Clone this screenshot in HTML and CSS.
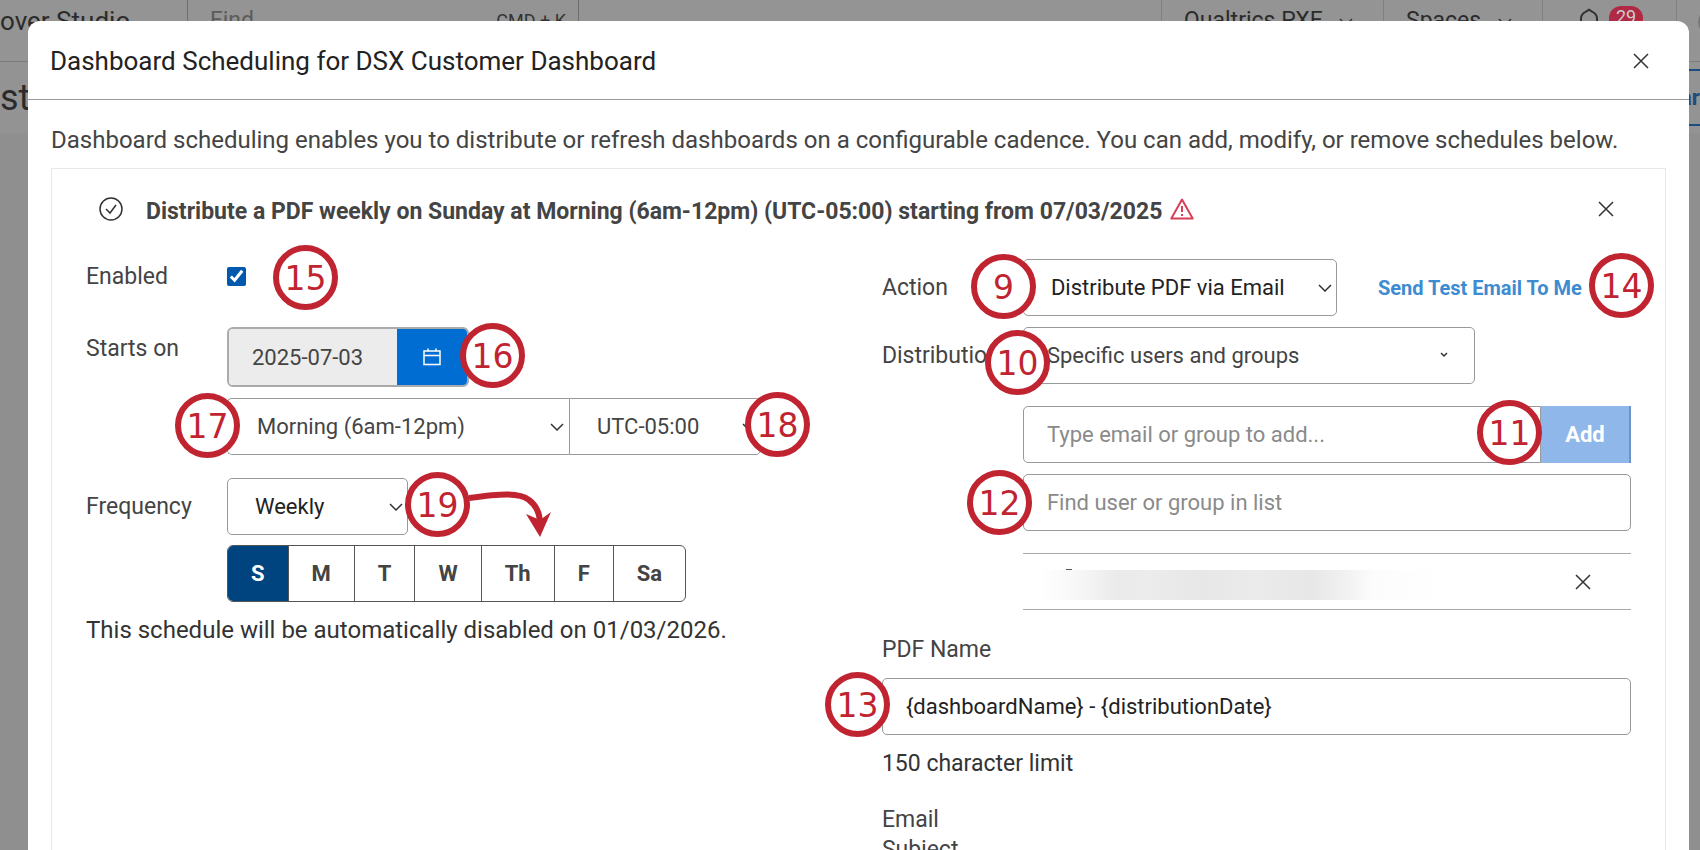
FILE: index.html
```html
<!DOCTYPE html>
<html lang="en">
<head>
    <meta charset="UTF-8">
    <meta name="viewport" content="width=device-width, initial-scale=1.0">
    <title>Dashboard Scheduling</title>
    <link rel="stylesheet" href="styles.css">
</head>
<body>
    <!-- page behind the dialog -->
    <header class="topbar">
        <div class="brand">over Studio</div>
        <div class="search"><span>Find</span><span class="shortcut">CMD + K</span></div>
        <div class="menu">Qualtrics PXE
            <svg width="14" height="8" viewBox="0 0 14 8"><path d="M1 1l6 6 6-6"/></svg>
        </div>
        <div class="menu menu-spaces">Spaces
            <svg width="14" height="8" viewBox="0 0 14 8"><path d="M1 1l6 6 6-6"/></svg>
        </div>
        <div class="alerts">
            <svg width="20" height="24" viewBox="0 0 20 24"><path d="M2 19V10a8 8 0 0 1 5-6.400l3-2 3 2A8 8 0 0 1 18 10v9z"/></svg>
            <span class="count">29</span>
        </div>
        <div class="user"><span></span></div>
    </header>
    <div class="subbar">
        <span class="page-name">st</span>
        <span class="share">ar</span>
    </div>

    <div class="overlay">
        <main class="modal">
            <div class="modal-header">
                <h1>Dashboard Scheduling for DSX Customer Dashboard</h1>
                <button class="close" aria-label="Close">
                    <svg width="16" height="16" viewBox="0 0 16 16"><path d="M1 1l14 14M15 1L1 15"/></svg>
                </button>
            </div>
            <div class="modal-body">
                <p class="intro">Dashboard scheduling enables you to distribute or refresh dashboards on a configurable cadence. You can add, modify, or remove schedules below.</p>

                <section class="card">
                    <div class="card-header">
                        <svg class="check" width="26" height="26" viewBox="0 0 26 26"><circle cx="13" cy="13" r="11"/><path d="M8 13l4 4 6-8"/></svg>
                        <h2>Distribute a PDF weekly on Sunday at Morning (6am-12pm) (UTC-05:00) starting from 07/03/2025</h2>
                        <svg class="warn" width="24" height="22" viewBox="0 0 24 22"><path d="M12 1.500L22.700 20.500H1.300z"/><path d="M12 8v6M12 16v2"/></svg>
                        <button class="close" aria-label="Remove schedule">
                            <svg width="16" height="16" viewBox="0 0 16 16"><path d="M1 1l14 14M15 1L1 15"/></svg>
                        </button>
                    </div>

                    <div class="columns">
                        <div class="left">
                            <div class="row row-enabled">
                                <label for="enabled">Enabled</label>
                                <input type="checkbox" id="enabled" checked>
                            </div>
                            <div class="row row-start">
                                <label for="start">Starts on</label>
                                <div class="date">
                                    <input type="text" id="start" value="2025-07-03" readonly>
                                    <button aria-label="Pick a date">
                                        <svg width="18" height="18" viewBox="0 0 18 18"><path d="M1 3h16v13.500H1zM1 7.500h16M5 0.500v3M13 0.500v3"/></svg>
                                    </button>
                                </div>
                            </div>
                            <div class="row">
                                <span></span>
                                <div class="times">
                                    <div class="select time">
                                        <select aria-label="Time of day"><option>Morning (6am-12pm)</option></select>
                                        <svg width="14" height="8" viewBox="0 0 14 8"><path d="M1 1l6 6 6-6"/></svg>
                                    </div>
                                    <div class="select zone">
                                        <select aria-label="Time zone"><option>UTC-05:00</option></select>
                                        <svg width="14" height="8" viewBox="0 0 14 8"><path d="M1 1l6 6 6-6"/></svg>
                                    </div>
                                </div>
                            </div>
                            <div class="row row-frequency">
                                <label for="frequency">Frequency</label>
                                <div class="select frequency">
                                    <select id="frequency"><option>Weekly</option></select>
                                    <svg width="14" height="8" viewBox="0 0 14 8"><path d="M1 1l6 6 6-6"/></svg>
                                </div>
                            </div>
                            <div class="row row-days">
                                <span></span>
                                <div class="days">
                                    <button class="active">S</button>
                                    <button>M</button>
                                    <button>T</button>
                                    <button>W</button>
                                    <button>Th</button>
                                    <button>F</button>
                                    <button>Sa</button>
                                </div>
                            </div>
                            <p class="note">This schedule will be automatically disabled on 01/03/2026.</p>
                        </div>

                        <div class="right">
                            <div class="row">
                                <label for="action">Action</label>
                                <div class="action">
                                    <div class="select distribute">
                                        <select id="action"><option>Distribute PDF via Email</option></select>
                                        <svg width="14" height="8" viewBox="0 0 14 8"><path d="M1 1l6 6 6-6"/></svg>
                                    </div>
                                    <a href="#">Send Test Email To Me</a>
                                </div>
                            </div>
                            <div class="row row-distribution">
                                <label for="distribution">Distribution</label>
                                <div class="select users">
                                    <select id="distribution"><option>Specific users and groups</option></select>
                                    <svg width="8" height="6" viewBox="0 0 8 6"><path d="M1 1l3 3 3-3"/></svg>
                                </div>
                            </div>
                            <div class="recipients">
                                <div class="add">
                                    <input type="text" aria-label="Recipient" placeholder="Type email or group to add...">
                                    <button>Add</button>
                                </div>
                                <input type="text" aria-label="Find recipient" placeholder="Find user or group in list">
                                <div class="recipient">
                                    <span class="hidden-name"></span>
                                    <button class="close" aria-label="Remove recipient">
                                        <svg width="16" height="16" viewBox="0 0 16 16"><path d="M1 1l14 14M15 1L1 15"/></svg>
                                    </button>
                                </div>
                            </div>
                            <div class="pdf">
                                <label for="pdf-name">PDF Name</label>
                                <input type="text" id="pdf-name" value="{dashboardName} - {distributionDate}">
                                <p>150 character limit</p>
                            </div>
                            <div class="subject">Email<br>Subject</div>
                        </div>
                    </div>
                </section>
            </div>
        </main>
    </div>

    <!-- numbered callouts -->
    <div class="callouts">
        <svg class="arrow" width="84" height="50" viewBox="0 0 84 50">
            <path class="line" d="M0 10C30 6 50 4 60 12C68 18 71 26 71 36"/>
            <path class="head" d="M71 49L57 26L71 32L82 24z"/>
        </svg>
        <span class="callout c9">9</span>
        <span class="callout c10">10</span>
        <span class="callout c11">11</span>
        <span class="callout c12">12</span>
        <span class="callout c13">13</span>
        <span class="callout c14">14</span>
        <span class="callout c15">15</span>
        <span class="callout c16">16</span>
        <span class="callout c17">17</span>
        <span class="callout c18">18</span>
        <span class="callout c19">19</span>
    </div>
</body>
</html>
```

FILE: styles.css
```css
* {
  box-sizing: border-box;
}

body {
  margin: 0;
  height: 100vh;
  overflow: hidden;
  position: relative;
  background-color: #8f8f8f;
  font-family: Roboto, "Liberation Sans", sans-serif;
  font-size: 22px;
  color: #444;
}

h1, h2, p {
  margin: 0;
}

svg {
  display: block;
  flex: none;
  fill: none;
  stroke: #333;
  stroke-width: 1.5;
}

button, input, select {
  font: inherit;
  color: inherit;
  margin: 0;
}

button {
  border: none;
  background: none;
  padding: 0;
  cursor: pointer;
}

/* page behind the dialog */
.topbar {
  display: flex;
  height: 62px;
  line-height: 42px;
  background-color: #949494;
  border-bottom: 1px solid #7c7c7c;
  font-size: 26px;
  color: #2b2b2b;
}

.brand {
  width: 187px;
}

.search {
  display: flex;
  justify-content: space-between;
  width: 392px;
  padding: 0 12px 0 22px;
  border-left: 1px solid #6e6e6e;
  border-right: 1px solid #6e6e6e;
  font-size: 23px;
  color: #5c5c5c;
}

.shortcut {
  font-size: 18px;
  color: #333;
}

.menu {
  display: flex;
  justify-content: space-between;
  width: 222px;
  margin-left: auto;
  padding: 0 30px 0 22px;
  border-left: 1px solid #808080;
  font-size: 23px;
}

.menu svg {
  margin-top: 18px;
}

.menu-spaces {
  width: 159px;
  margin-left: 0;
}

.alerts {
  display: flex;
  gap: 10px;
  width: 134px;
  padding-left: 36px;
  border-left: 1px solid #808080;
}

.alerts svg {
  margin-top: 8px;
  stroke-width: 2;
}

.count {
  width: 34px;
  height: 26px;
  margin-top: 6px;
  border-radius: 12px;
  background-color: #b02a45;
  color: #ccc;
  font-size: 18px;
  line-height: 22px;
  text-align: center;
}

.user {
  width: 24px;
  padding: 10px 0 0 21px;
  border-left: 1px solid #808080;
  overflow: hidden;
}

.user span {
  display: block;
  width: 24px;
  height: 24px;
  border-radius: 50%;
  background-color: #777;
}

.subbar {
  display: flex;
  justify-content: space-between;
  height: 71px;
  padding: 7px 0;
  background-color: #939393;
}

.page-name {
  font-size: 36px;
  line-height: 58px;
  color: #2b2b2b;
}

.share {
  width: 20px;
  border: solid #1d4c80;
  border-width: 2px 0;
  color: #1d4c80;
  font-size: 22px;
  font-weight: bold;
  line-height: 54px;
}

/* dialog */
.overlay {
  position: absolute;
  inset: 0;
  padding: 21px 11px 0 28px;
  overflow: hidden;
}

.modal {
  min-height: 100%;
  background-color: #fff;
  border-radius: 12px 12px 0 0;
}

.modal-header {
  display: flex;
  align-items: center;
  justify-content: space-between;
  height: 79px;
  padding: 2px 40px 0 22px;
  border-bottom: 1px solid #999;
}

h1 {
  font-size: 26px;
  font-weight: normal;
  color: #222;
}

.modal-body {
  padding: 24px 23px 0 23px;
}

.intro {
  font-size: 24px;
  line-height: 32px;
  white-space: nowrap;
}

.card {
  margin-top: 12px;
  padding: 0 34px;
  border: 1px solid #e8e8e8;
  height: 760px;
}

.card-header {
  display: flex;
  align-items: center;
  height: 80px;
  padding-left: 12px;
}

h2 {
  margin: 0 8px 0 22px;
  padding-top: 6px;
  font-size: 23px;
  line-height: 28px;
  white-space: nowrap;
}

.card-header .close {
  margin: 0 17px 0 auto;
}

.warn {
  stroke: #d63f55;
  stroke-width: 2;
  stroke-linejoin: round;
}

.columns {
  display: grid;
  grid-template-columns: 17fr 16fr;
}

.row {
  display: grid;
  grid-template-columns: 141px 1fr;
  align-items: center;
}

label, .pdf p, .subject {
  font-size: 23px;
}

.left {
  padding-top: 11px;
}

.right {
  padding-top: 10px;
}

.row-enabled {
  height: 32px;
}

.row-enabled input {
  width: 19px;
  height: 19px;
  accent-color: #0059ad;
}

.row-start {
  margin-top: 35px;
  align-items: start;
  line-height: 44px;
}

input[type="text"] {
  display: block;
  width: 100%;
  height: 57px;
  padding: 0 23px;
  border: 1px solid #999;
  border-radius: 5px;
  background-color: #fff;
}

input::placeholder {
  color: #8a8a8a;
}

.date {
  display: flex;
  width: 242px;
  height: 60px;
  border: 2px solid #aaa;
  border-radius: 6px;
  overflow: hidden;
}

.date input[type="text"] {
  flex: 1;
  min-width: 0;
  height: 100%;
  border: none;
  border-radius: 0;
  background-color: #ececec;
}

.date button {
  display: flex;
  align-items: center;
  justify-content: center;
  width: 70px;
  background-color: #006dd3;
}

.date svg {
  stroke: #fff;
}

.select {
  position: relative;
}

.select select {
  appearance: none;
  display: block;
  width: 100%;
  height: 57px;
  padding: 0 27px;
  border: 1px solid #999;
  border-radius: 5px;
  background-color: #fff;
}

.select svg {
  position: absolute;
  right: 5px;
  top: 25px;
  pointer-events: none;
}

.times {
  display: flex;
  margin-top: 11px;
}

.time {
  width: 342px;
}

.time select {
  padding: 0 29px;
  border-radius: 5px 0 0 5px;
  border-right: none;
}

.zone {
  width: 192px;
}

.zone select {
  border-radius: 0 5px 5px 0;
}

.row-frequency {
  margin-top: 23px;
}

.frequency {
  width: 181px;
}

.frequency select, .distribute select {
  color: #222;
}

.row-days {
  margin-top: 10px;
}

.days {
  display: flex;
  justify-self: start;
  border: 1px solid #555;
  border-radius: 6px;
  overflow: hidden;
}

.days button {
  height: 55px;
  padding: 0 23px;
  border-left: 1px solid #555;
  font-weight: bold;
}

.days .active {
  border-left: none;
  background-color: #00447f;
  color: #fff;
}

.note {
  margin-top: 12px;
  font-size: 24px;
  line-height: 32px;
  color: #333;
}

.action {
  display: flex;
  align-items: center;
}

.distribute {
  width: 314px;
}

.action a {
  margin-left: 41px;
  font-size: 20px;
  font-weight: bold;
  color: #3d8bd0;
  text-decoration: none;
  white-space: nowrap;
}

.row-distribution {
  margin-top: 11px;
}

.users {
  width: 452px;
}

.users select {
  padding: 0 23px;
}

.users svg {
  right: 27px;
}

.recipients {
  margin: 22px 0 0 141px;
}

.add {
  display: flex;
  margin-bottom: 11px;
}

.add input[type="text"] {
  flex: 1;
  min-width: 0;
  border-radius: 5px 0 0 5px;
}

.add button {
  width: 90px;
  border-right: 2px solid #6d95c8;
  background-color: #8fb7ea;
  color: #fff;
  font-weight: bold;
}

.recipient {
  display: flex;
  align-items: center;
  justify-content: space-between;
  height: 57px;
  margin-top: 22px;
  padding: 0 40px 0 17px;
  border: solid #aaa;
  border-width: 1px 0;
}

.hidden-name {
  position: relative;
  width: 405px;
  height: 30px;
  margin-top: 6px;
  background: linear-gradient(to right, #fff, #f8f8f8 8%, #f3f3f3 13%, #eaeaea 19%, #ececec 26%, #e7e7e7 40%, #ebebeb 53%, #e7e7e7 67%, #f2f2f2 76%, #fcfcfc 82%, #fff);
}

.hidden-name::before {
  content: "";
  position: absolute;
  left: 26px;
  top: -1px;
  width: 6px;
  height: 1px;
  background-color: #555;
}

.pdf {
  margin-top: 23px;
}

.pdf label {
  display: block;
  margin-bottom: 11px;
  line-height: 34px;
}

.pdf input[type="text"] {
  color: #222;
}

.pdf p {
  margin-top: 12px;
  line-height: 34px;
  color: #333;
}

.subject {
  margin-top: 24px;
  line-height: 30px;
}

/* callouts */
.callouts {
  position: absolute;
  inset: 0;
  overflow: hidden;
  pointer-events: none;
}

.callout {
  position: absolute;
  width: 65px;
  height: 65px;
  border: 6px solid #c12431;
  border-radius: 50%;
  background-color: #fff;
  color: #c12431;
  font-family: "DejaVu Sans", sans-serif;
  font-size: 33px;
  line-height: 56px;
  text-align: center;
}

.c9 { left: 971px; top: 254px; }
.c10 { left: 985px; top: 330px; }
.c11 { left: 1477px; top: 400px; }
.c12 { left: 967px; top: 470px; }
.c13 { left: 825px; top: 672px; }
.c14 { left: 1589px; top: 253px; }
.c15 { left: 273px; top: 245px; }
.c16 { left: 460px; top: 323px; }
.c17 { left: 175px; top: 393px; }
.c18 { left: 745px; top: 392px; }
.c19 { left: 405px; top: 472px; }

.arrow {
  position: absolute;
  left: 469px;
  top: 488px;
}

.arrow .line {
  stroke: #c12431;
  stroke-width: 6;
}

.arrow .head {
  stroke: none;
  fill: #c12431;
}
```
